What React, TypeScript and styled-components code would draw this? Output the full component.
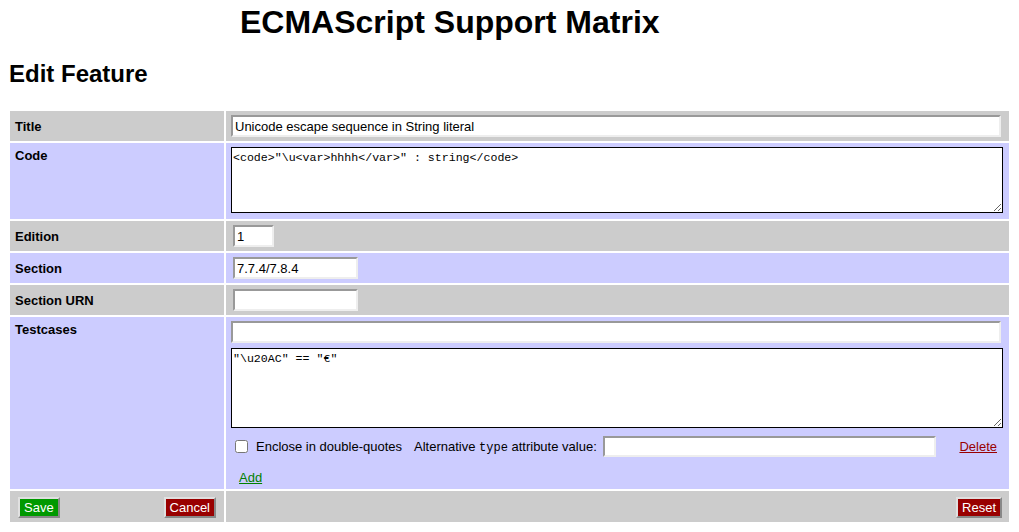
import React from 'react';
import styled, { createGlobalStyle } from 'styled-components';

const GlobalStyle = createGlobalStyle`
  body {
    margin: 0 8px;
    background: #fff;
    color: #000;
    font-family: "Liberation Sans", Arial, sans-serif;
  }
`;

const PageTitle = styled.h1`
  margin: 4px 0 0;
  padding-left: 232px;
  font-size: 32px;
  line-height: 37px;
  font-weight: bold;
`;

const SectionTitle = styled.h2`
  margin: 19px 0 21px 1px;
  font-size: 24px;
  line-height: 28px;
  font-weight: bold;
`;

const FormTable = styled.table`
  width: 100%;
  border-spacing: 2px;
  table-layout: fixed;
`;

const Row = styled.tr<{ $alt?: boolean; $height?: number }>`
  background: ${p => (p.$alt ? '#ccccff' : '#cccccc')};
  height: ${p => (p.$height ? `${p.$height}px` : 'auto')};
`;

const Label = styled.th<{ $top?: boolean }>`
  width: 204px;
  padding: ${p => (p.$top ? '5px' : '0')} 5px 0;
  vertical-align: ${p => (p.$top ? 'top' : 'middle')};
  text-align: left;
  font-size: 13px;
  font-weight: bold;
`;

const Field = styled.td`
  padding: 4px 6px 4px 5px;
  vertical-align: top;
  font-size: 13px;
`;

const TextInput = styled.input<{ $width?: number; $inset?: number; $short?: boolean }>`
  display: block;
  box-sizing: border-box;
  width: ${p => (p.$width ? `${p.$width}px` : 'calc(100% - 2px)')};
  height: ${p => (p.$short ? 21 : 22)}px;
  margin-left: ${p => p.$inset ?? 0}px;
  padding: 0 2px;
  border: 2px solid;
  border-color: #999 #eee #eee #999;
  background: #fff;
  font-family: "Liberation Sans", Arial, sans-serif;
  font-size: 13px;
  outline: none;
`;

const CodeArea = styled.textarea<{ $height: number }>`
  display: block;
  box-sizing: border-box;
  width: 100%;
  height: ${p => p.$height}px;
  margin: 0;
  padding: 3px 1px;
  border: 1px solid #000;
  background: #fff;
  font-family: "Liberation Mono", "Courier New", monospace;
  font-size: 11.6px;
  line-height: 14px;
  outline: none;
`;

const Stack = styled.div`
  display: flex;
  flex-direction: column;
`;

const OptionsRow = styled.div`
  display: flex;
  align-items: center;
  height: 21px;
  margin-top: 8px;
  font-size: 13px;
`;

const CheckLabel = styled.label`
  display: flex;
  align-items: center;
  gap: 8px;
  margin-left: 4px;
  input {
    width: 13px;
    height: 13px;
    margin: 0;
  }
`;

const AltLabel = styled.span`
  margin-left: 12px;
  code {
    font-family: "Liberation Mono", "Courier New", monospace;
    font-size: 12px;
  }
`;

const Link = styled.a<{ $tone: 'red' | 'green' }>`
  color: ${p => (p.$tone === 'red' ? '#990000' : '#008000')};
  text-decoration: underline;
  font-size: 13px;
  line-height: 15px;
  cursor: pointer;
`;

const DeleteLink = styled(Link)`
  margin-left: auto;
  margin-right: 6px;
`;

const AddLink = styled(Link)`
  align-self: flex-start;
  margin: 13px 0 0 8px;
`;

const ButtonBar = styled.div<{ $end?: boolean }>`
  display: flex;
  justify-content: ${p => (p.$end ? 'flex-end' : 'space-between')};
  padding: 5px ${p => (p.$end ? '7px' : '8px')} 4px 8px;
`;

const Button = styled.button<{ $kind: 'save' | 'danger' }>`
  height: 21px;
  padding: 0 4px;
  border: 2px solid;
  border-color: #e0e0e0 #888 #888 #e0e0e0;
  background: ${p => (p.$kind === 'save' ? '#009900' : '#990000')};
  color: #fff;
  font-family: "Liberation Sans", Arial, sans-serif;
  font-size: 13px;
  line-height: 15px;
  cursor: pointer;
`;

const ButtonCell = styled.td`
  padding: 0;
`;

const App: React.FC = () => {
  return (
    <>
      <GlobalStyle />
      <PageTitle>ECMAScript Support Matrix</PageTitle>
      <SectionTitle>Edit Feature</SectionTitle>
      <form onSubmit={e => e.preventDefault()}>
        <FormTable>
          <tbody>
            <Row $height={30}>
              <Label>Title</Label>
              <Field>
                <TextInput defaultValue='Unicode escape sequence in String literal' />
              </Field>
            </Row>
            <Row $alt $height={76}>
              <Label $top>Code</Label>
              <Field>
                <CodeArea
                  $height={66}
                  defaultValue={'<code>"\\u<var>hhhh</var>" : string</code>'}
                />
              </Field>
            </Row>
            <Row $height={30}>
              <Label>Edition</Label>
              <Field>
                <TextInput $width={41} $inset={2} defaultValue='1' />
              </Field>
            </Row>
            <Row $alt $height={30}>
              <Label>Section</Label>
              <Field>
                <TextInput $width={125} $inset={2} defaultValue='7.7.4/7.8.4' />
              </Field>
            </Row>
            <Row $height={30}>
              <Label>Section URN</Label>
              <Field>
                <TextInput $width={125} $inset={2} />
              </Field>
            </Row>
            <Row $alt $height={172}>
              <Label $top>Testcases</Label>
              <Field>
                <Stack>
                  <TextInput />
                  <CodeArea
                    $height={80}
                    defaultValue={'"\\u20AC" == "€"'}
                    style={{ marginTop: 5 }}
                  />
                  <OptionsRow>
                    <CheckLabel>
                      <input type='checkbox' />
                      Enclose in double-quotes
                    </CheckLabel>
                    <AltLabel>
                      Alternative <code>type</code> attribute value:
                    </AltLabel>
                    <TextInput $width={333} $inset={6} $short />
                    <DeleteLink $tone='red'>Delete</DeleteLink>
                  </OptionsRow>
                  <AddLink $tone='green'>Add</AddLink>
                </Stack>
              </Field>
            </Row>
            <Row $height={31}>
              <ButtonCell>
                <ButtonBar>
                  <Button type='submit' $kind='save'>Save</Button>
                  <Button type='button' $kind='danger'>Cancel</Button>
                </ButtonBar>
              </ButtonCell>
              <ButtonCell>
                <ButtonBar $end>
                  <Button type='reset' $kind='danger'>Reset</Button>
                </ButtonBar>
              </ButtonCell>
            </Row>
          </tbody>
        </FormTable>
      </form>
    </>
  );
};

export default App;
